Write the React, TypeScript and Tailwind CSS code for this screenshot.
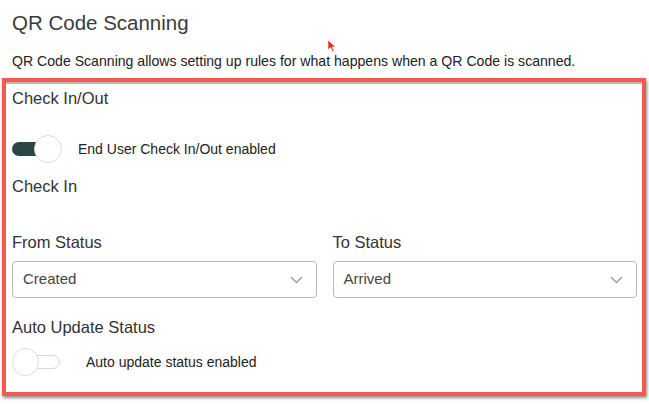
import React from "react";

const font = { fontFamily: '"Liberation Sans", Arial, sans-serif' };

function Toggle({ on }: { on: boolean }) {
  return (
    <div className="relative h-[28px] w-[50px] shrink-0">
      <div
        className={
          on
            ? "absolute top-[7px] right-[4px] left-0 h-[14px] rounded-full bg-[#2c4646]"
            : "absolute top-[7px] right-[2px] left-[4px] h-[14px] rounded-full border border-[#d6d6d6] bg-white"
        }
      />
      <div
        className={
          on
            ? "absolute top-0 left-[22px] h-[28px] w-[28px] rounded-full border border-[#dcdcdc] bg-white"
            : "absolute top-0 left-0 h-[28px] w-[27px] rounded-full border border-[#dcdcdc] bg-white"
        }
      />
    </div>
  );
}

function Select({ value }: { value: string }) {
  return (
    <div className="flex h-[37px] items-center justify-between rounded-[4px] border border-[#b9b9b9] bg-white pr-[13px] pl-[10px]">
      <span className="text-[15px] text-[#444]">{value}</span>
      <svg width="13" height="8" viewBox="0 0 13 8" fill="none">
        <path d="M1.5 1.5 L6.5 6.5 L11.5 1.5" stroke="#a3a3a3" strokeWidth="1.6" strokeLinecap="round" strokeLinejoin="round" />
      </svg>
    </div>
  );
}

export default function App() {
  return (
    <div className="relative h-[404px] w-[649px] overflow-hidden bg-white" style={font}>
      {/* Mouse cursor */}
      <svg className="absolute top-[39px] left-[327px]" width="10" height="14" viewBox="0 0 10 14">
        <path d="M1 1 L1 11 L3.5 8.5 L5.5 13 L7 12.3 L5.2 8 L8.5 8 Z" fill="#ee2a1b" stroke="#fff" strokeWidth="0.6" />
      </svg>

      <h1 className="mt-[9px] pl-[12px] text-[20.5px] leading-[28px] text-[#3b3b3b]">QR Code Scanning</h1>
      <p className="mt-[14px] pl-[12px] text-[14.1px] leading-[20px] text-[#222]">
        QR Code Scanning allows setting up rules for what happens when a QR Code is scanned.
      </p>

      <div className="mt-[7px] ml-[2px] w-[644px] border-4 border-[#f25a4e] shadow-[1px_2px_3px_rgba(0,0,0,0.45)]">
        <div className="border-t-2 border-[#b8b8b8] pr-[5px] pb-[16px] pl-[6px]">
          <div className="pt-[2px] text-[16.5px] leading-[24px] text-[#333]">Check In/Out</div>

          <div className="mt-[25px] flex items-center">
            <Toggle on />
            <span className="ml-[16px] text-[14px] text-[#222]">End User Check In/Out enabled</span>
          </div>

          <div className="mt-[11px] text-[16.5px] leading-[24px] text-[#333]">Check In</div>

          <div className="mt-[32px] grid grid-cols-2 gap-[16px]">
            <div>
              <div className="text-[16.5px] leading-[24px] text-[#333]">From Status</div>
              <div className="mt-[7px]">
                <Select value="Created" />
              </div>
            </div>
            <div>
              <div className="text-[16.5px] leading-[24px] text-[#333]">To Status</div>
              <div className="mt-[7px]">
                <Select value="Arrived" />
              </div>
            </div>
          </div>

          <div className="mt-[17px] text-[16.5px] leading-[24px] text-[#333]">Auto Update Status</div>

          <div className="mt-[9px] flex items-center">
            <Toggle on={false} />
            <span className="ml-[24px] text-[14px] text-[#222]">Auto update status enabled</span>
          </div>
        </div>
      </div>
    </div>
  );
}
